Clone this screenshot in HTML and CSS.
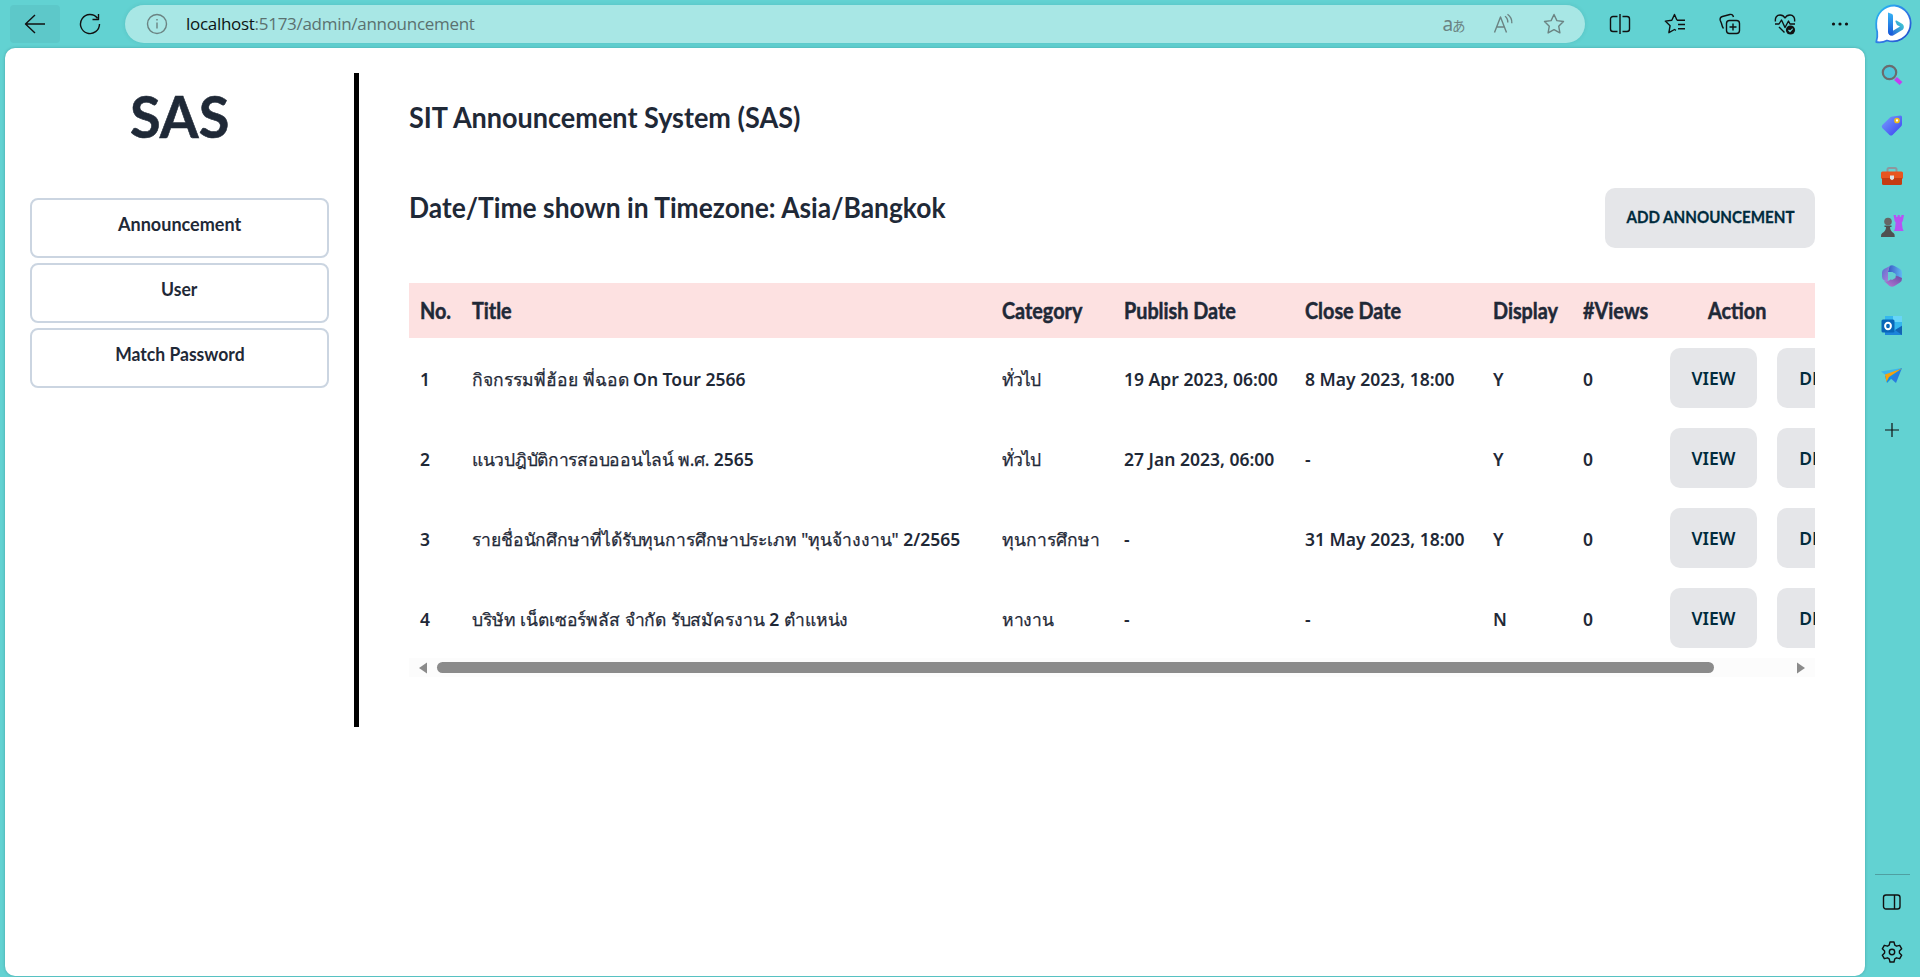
FILE: index.html
```
<!DOCTYPE html>
<html lang="en">
<head>
<meta charset="utf-8">
<title>SIT Announcement System</title>
<link rel="stylesheet" href="styles.css">
</head>
<body>
<header class="toolbar">
  <div class="back"><svg width="22" height="22" viewBox="0 0 22 22"><path d="M21 11H1.500M11 2L1.500 11l9.500 9"/></svg></div>
  <div class="reload"><svg width="22" height="22" viewBox="0 0 22 22"><path d="M20.500 11A9.500 9.500 0 1 1 18.500 5.200M19.500 1v5.500h-6"/></svg></div>
  <div class="address">
    <svg class="info" width="22" height="22" viewBox="0 0 22 22"><circle cx="11" cy="11" r="9.500"/><path d="M11 9.500v6M11 6v1.500"/></svg>
    <div class="url"><span class="host">localhost</span>:5173/admin/announcement</div>
    <div class="tool translate"><span class="latin">a</span><span class="kana">あ</span></div>
    <div class="tool"><svg width="22" height="22" viewBox="0 0 22 22"><path d="M1.500 19.500L7.500 4l6 15.500M3.500 14h8M12 3.200q3 2.200 2.800 6.300M14.500 1.300q4.700 3.300 4.300 9"/></svg></div>
    <div class="tool"><svg width="22" height="22" viewBox="0 0 22 22"><path d="M11 1.500l2.900 6.100 6.600.9-4.800 4.700 1.200 6.700-5.900-3.200-5.900 3.200 1.200-6.700L1.500 8.500l6.600-.9z"/></svg></div>
  </div>
  <div class="slot"><svg width="22" height="22" viewBox="0 0 22 22"><path d="M8.500 3.500H4A2.500 2.500 0 0 0 1.500 6v10A2.500 2.500 0 0 0 4 18.500h4.500M13.500 3.500H18A2.500 2.500 0 0 1 20.500 6v10a2.500 2.500 0 0 1-2.500 2.500h-4.500M11 1v20"/></svg></div>
  <div class="slot"><svg width="22" height="22" viewBox="0 0 22 22"><path d="M13 7.200h8M14 11.500h7M14 15.800h7M13 7.200L10.500 1.500 7.800 7.300l-6.500.8 4.800 4.600-1.200 7 5.600-3.200 1.500.8"/></svg></div>
  <div class="slot"><svg width="22" height="22" viewBox="0 0 22 22"><rect x="7.500" y="7.500" width="13" height="13" rx="3"/><path d="M14 10.500v7M10.500 14h7M4.500 15.500c-1-1-1.500-2.700-2-5L1.200 7.200C.8 5 1.500 4 3.400 3.500l7.500-2c2-.5 3 .2 3.600 2.500"/></svg></div>
  <div class="slot"><svg width="22" height="22" viewBox="0 0 22 22"><path d="M1.500 8.500C.7 4.500 3 2 6 2c2.500 0 4 1.200 5 3 1-1.800 2.500-3 5-3 3 0 5.300 2.500 4.500 6.500M1 11h4l2.500-4 3.500 7.500L14.500 8l1.500 3h5M5 14l5.500 5.500"/><circle cx="16.500" cy="17" r="4.600" class="solid"/><path class="tick" d="M14.500 17l1.500 1.500 2.700-2.800"/></svg></div>
  <div class="slot"><svg width="22" height="22" viewBox="0 0 22 22"><g class="solid"><circle cx="4.500" cy="11" r="1.600"/><circle cx="11" cy="11" r="1.600"/><circle cx="17.500" cy="11" r="1.600"/></g></svg></div>
  <div class="bing"><svg width="40" height="40" viewBox="0 0 40 40">
    <defs><linearGradient id="ring" x1="0" y1="0" x2="1" y2="1"><stop offset="0" stop-color="#25bff2"/><stop offset=".55" stop-color="#3179e6"/><stop offset="1" stop-color="#1c49c9"/></linearGradient><linearGradient id="stem" x1="0" y1="0" x2="0" y2="1"><stop offset="0" stop-color="#38b5f5"/><stop offset="1" stop-color="#1556d8"/></linearGradient><linearGradient id="bowl" x1="0" y1="1" x2="1" y2="0"><stop offset="0" stop-color="#2456de"/><stop offset="1" stop-color="#43d8d0"/></linearGradient></defs>
    <path d="M20.500 1.500A18 18 0 1 1 13 36.500Q8 39 2.200 38q1.600-4.500 1-10Q2 24 2.200 19.500A18 18 0 0 1 20.500 1.500z" fill="#fff" stroke="url(#ring)" stroke-width="1.800"/>
    <path d="M15 30.500q2 2 4.500.7l9.500-5.700q2-3-.5-5.500l-6-3.500q-1.500-.3-1 1.200l1.500 3.400 3 1.500-10 6z" fill="url(#bowl)" stroke="none"/>
    <path d="M14 8.500l4 1.500q1 .5 1 2v17q-1 3-3.500 1.800Q14 30 14 28z" fill="url(#stem)" stroke="none"/></svg></div>
</header>
<div class="window">
  <div class="page">
    <aside class="side">
      <h1 class="logo"><span>SAS</span></h1>
      <nav class="menu">
        <a class="item"><span class="n1">Announcement</span></a>
        <a class="item"><span class="n2">User</span></a>
        <a class="item"><span class="n3">Match Password</span></a>
      </nav>
    </aside>
    <main class="content">
      <h2 class="heading system"><span>SIT Announcement System (SAS)</span></h2>
      <div class="bar">
        <h2 class="heading zone"><span>Date/Time shown in Timezone: Asia/Bangkok</span></h2>
        <button class="btn add"><span>ADD ANNOUNCEMENT</span></button>
      </div>
      <div class="table">
        <div class="row head"><span>No.</span><span>Title</span><span>Category</span><span>Publish Date</span><span>Close Date</span><span>Display</span><span>#Views</span><span class="act">Action</span></div>
        <div class="row"><div>1</div><div><span class="th">กิจกรรมพี่ฮ้อย พี่ฉอด</span> On Tour 2566</div><div class="th short">ทั่วไป</div><div>19 Apr 2023, 06:00</div><div>8 May 2023, 18:00</div><div>Y</div><div>0</div><div class="actions"><button class="btn">VIEW</button><button class="btn delete">DELETE</button></div></div>
        <div class="row"><div>2</div><div><span class="th tight">แนวปฎิบัติการสอบออนไลน์ พ.ศ.</span> 2565</div><div class="th short">ทั่วไป</div><div>27 Jan 2023, 06:00</div><div>-</div><div>Y</div><div>0</div><div class="actions"><button class="btn">VIEW</button><button class="btn delete">DELETE</button></div></div>
        <div class="row"><div>3</div><div><span class="th close">รายชื่อนักศึกษาที่ได้รับทุนการศึกษาประเภท "ทุนจ้างงาน"</span> 2/2565</div><div class="th">ทุนการศึกษา</div><div>-</div><div>31 May 2023, 18:00</div><div>Y</div><div>0</div><div class="actions"><button class="btn">VIEW</button><button class="btn delete">DELETE</button></div></div>
        <div class="row"><div>4</div><div><span class="th close">บริษัท เน็ตเซอร์พลัส จำกัด รับสมัครงาน</span> 2 <span class="th close">ตำแหน่ง</span></div><div class="th tight">หางาน</div><div>-</div><div>-</div><div>N</div><div>0</div><div class="actions"><button class="btn">VIEW</button><button class="btn delete">DELETE</button></div></div>
      </div>
      <div class="scroll"><svg width="8" height="12" viewBox="0 0 8 12"><path d="M8 .5v11L0 6z"/></svg><div class="thumb"></div><svg width="8" height="12" viewBox="0 0 8 12"><path d="M0 .5v11L8 6z"/></svg></div>
    </main>
  </div>
  <aside class="apps">
    <div class="app"><svg width="24" height="24" viewBox="0 0 24 24"><path d="M15.500 15.500l5.500 5" stroke="#c63cf2" stroke-width="4.200"/><circle cx="9.500" cy="9.500" r="6.700" fill="#4fc6da" stroke="#6b6b6e" stroke-width="2.200"/></svg></div>
    <div class="app"><svg class="low" width="24" height="24" viewBox="0 0 24 24"><defs><linearGradient id="tag" x1="0" y1="0" x2="1" y2="1"><stop offset="0" stop-color="#78a3ff"/><stop offset="1" stop-color="#3a3ef0"/></linearGradient></defs><path d="M12.500 2.500l8-1q1.500 0 1.500 1.500v7q0 1.500-1 2.500l-8.500 8.500q-1.500 1.200-3 0L2.300 14q-1.200-1.500 0-3l8-7.700q1-.7 2.200-.8z" fill="url(#tag)"/><circle cx="17" cy="6.500" r="2" fill="#fff" stroke="#f2bc17" stroke-width="1.700"/></svg></div>
    <div class="app"><svg width="24" height="24" viewBox="0 0 24 24"><path d="M7.500 8V5.500q0-1.500 1.500-1.500h6q1.500 0 1.500 1.500V8" fill="none" stroke="#8e979d" stroke-width="2"/><rect x="1" y="7.500" width="22" height="7.500" rx="1.500" fill="#e8551f"/><path d="M2 14h20v5.500q0 1.500-1.500 1.500h-17Q2 21 2 19.500z" fill="#c43c12"/><path d="M10 11.500h4v3.200l-2 1.500-2-1.500z" fill="#dce3e6"/></svg></div>
    <div class="app"><svg width="24" height="24" viewBox="0 0 24 24"><path d="M13.500 1h2.500v1.800h1.700V1h2v1.800h1.600V1H24l-1.200 6-1 1.500.8 6 1 2.500H14l1-2.500.7-6-1-1.500z" fill="#b653f4"/><circle cx="8" cy="7.500" r="3.800" fill="#666"/><path d="M4.500 11.500h7v1.500H10q.2 4 3.500 6 1.500 1.200 1.200 4H1q-.3-2.800 1.300-4Q6 17 6 13H4.500z" fill="#505050"/></svg></div>
    <div class="app"><svg width="24" height="24" viewBox="0 0 24 24"><defs><linearGradient id="petal" x1="0" y1="0" x2="1" y2="0"><stop offset="0" stop-color="#3b56c4"/><stop offset="1" stop-color="#5fb9f2"/></linearGradient><linearGradient id="left" x1="0" y1="0" x2="1" y2="1"><stop offset="0" stop-color="#5270d0"/><stop offset="1" stop-color="#b97fd8"/></linearGradient><linearGradient id="base" x1="0" y1="1" x2="1" y2="0"><stop offset="0" stop-color="#b77cd8"/><stop offset="1" stop-color="#6a4aa5"/></linearGradient></defs><path d="M9.500 2q2.500-1.500 5 0l5.500 3q2 1.200 2 3.500v5.500l-6.500-2V10L12 8 8 8z" fill="url(#petal)"/><path d="M10.500 1.700Q8 4 8 8v8.500q0 1.500-1.500 1L4 16.300q-2-1.200-2-3.500V8.500Q2 6 4 5z" fill="url(#left)"/><path d="M4 17q2.500 1.200 5-.5l6-4q1.500-1 3-.3l4 1.800q.2 3-2 4.500L14.500 22q-2.500 1.500-5 0z" fill="url(#base)"/><path d="M12 8l3.500 2v4L12 16l-3.500-2v-4z" fill="#64cdd2"/></svg></div>
    <div class="app"><svg class="high" width="24" height="24" viewBox="0 0 24 24"><path d="M5 2h17v19H5z" fill="#35b7ee"/><path d="M13 2h9v6h-9z" fill="#67d5f7"/><path d="M5 13l9 4 8-5.500V21H5z" fill="#1b83da"/><path d="M15 16l7-4v9z" fill="#1264b4"/><rect x="1.500" y="5.500" width="13" height="13" rx="1.500" fill="#0866b8"/><ellipse cx="8" cy="12" rx="2.900" ry="3.300" fill="none" stroke="#fff" stroke-width="2"/></svg></div>
    <div class="app"><svg class="high" width="24" height="24" viewBox="0 0 24 24"><path d="M1 7.500L22 4 8 13z" fill="#3cb5ef"/><path d="M22 4l-6 15-7-6z" fill="#277de0"/><path d="M22 4L5 12l2 7 4-4z" fill="#168ce6"/><path d="M22 4.500L5 10.500l1.500 7.500 2.500-5z" fill="#f6a20d"/></svg></div>
    <div class="app plus"><svg width="16" height="16" viewBox="0 0 16 16"><path d="M8 1v14M1 8h14"/></svg></div>
    <hr class="rule">
    <div class="foot"><svg width="20" height="20" viewBox="0 0 20 20"><rect x="1.500" y="3" width="16.500" height="14" rx="2.500"/><path d="M12.500 3v14"/></svg></div>
    <div class="foot"><svg width="24" height="24" viewBox="0 0 24 24"><circle cx="12" cy="12" r="2.700"/><path d="M10 2h4l.8 3.200 1.700 1 3.200-.9 2 3.500L19.400 11v2l2.300 2.200-2 3.500-3.200-.9-1.700 1L14 22h-4l-.8-3.200-1.700-1-3.200.9-2-3.500L4.600 13v-2L2.300 8.800l2-3.500 3.200.9 1.700-1z"/></svg></div>
  </aside>
</div>
</body>
</html>
```
FILE: styles.css
```
* { box-sizing: border-box; }
body { margin: 0; height: 977px; overflow: hidden; background: #62d2d2; color: #1f2937; font-family: "Noto Sans", sans-serif; display: flex; flex-direction: column; }
svg { display: block; flex: none; fill: none; stroke: #111; stroke-width: 1.4; stroke-linejoin: round; }
svg .solid { fill: #111; stroke: none; }
svg .tick { stroke: #62d2d2; stroke-width: 1.2; }

.toolbar { height: 48px; flex: none; display: flex; align-items: center; padding: 0 6px 0 10px; }
.back { width: 50px; height: 38px; border-radius: 4px; background: #5dc8c9; display: flex; align-items: center; justify-content: center; }
.reload { width: 60px; display: flex; justify-content: center; }
.address { width: 1460px; height: 38px; margin-left: 5px; border-radius: 19px; background: #a8e7e5; display: flex; align-items: center; padding: 0 6px 0 21px; box-shadow: 0 0 4px rgba(0, 70, 80, .12); }
.address svg { stroke: #6b8382; }
.url { flex: 1; margin-left: 18px; font: 400 17px/24px "Open Sans", sans-serif; letter-spacing: -.29px; color: #5b7170; }
.url .host { color: #0c1414; }
.tool { width: 50px; display: flex; justify-content: center; color: #6b8382; }
.translate { align-items: baseline; line-height: 24px; }
.latin { font-size: 19px; }
.kana { font: 13.5px "Noto Sans CJK JP", sans-serif; margin-left: -1px; }
.slot { width: 55.2px; display: flex; justify-content: center; }
.address + .slot { margin-left: 7px; }
.bing { margin-left: auto; }

.window { flex: 1; display: flex; padding-left: 5px; }
.page { width: 1860px; height: 928px; background: #fff; border-radius: 10px; display: flex; align-items: flex-start; padding-top: 25px; box-shadow: 0 0 3px rgba(0, 60, 70, .3); }
.side { width: 354px; height: 654px; border-right: 5px solid #000; padding: 13px 25px 0; }
.logo { margin: 0 0 52px; font: 700 57px/60px Lato, sans-serif; text-align: center; -webkit-text-stroke: .6px #1f2937; }
.logo span, .item span, .heading span, .add span, .head span { display: inline-block; white-space: nowrap; transform: scaleX(.98); }
.menu { display: flex; flex-direction: column; gap: 5px; }
.item { height: 60px; border: 2px solid #cbd5e1; border-radius: 8px; padding-top: 12px; text-align: center; font: 700 19.5px/24px Lato, sans-serif; }
.item .n1 { transform: scaleX(.925); }
.item .n2, .item .n3 { transform: scaleX(.9); }

.content { width: 1406px; margin-left: 50px; }
.heading { margin: 0; font: 700 28.5px/36px Lato, sans-serif; }
.heading span { transform-origin: left; }
.system { padding-top: 26px; }
.system span { transform: scaleX(.948); }
.zone { padding-top: 1px; }
.zone span { transform: scaleX(.926); }
.bar { display: flex; justify-content: space-between; align-items: flex-start; margin-top: 53px; height: 95px; }
.btn { height: 60px; padding: 0; border: 0; border-radius: 10px; background: #e5e6e9; color: #002b3d; font: 600 17.5px/24px "Noto Sans", sans-serif; width: 87px; flex: none; }
.delete { width: 106px; }
.add { width: 210px; padding-bottom: 2px; font: 700 17px/24px Lato, sans-serif; -webkit-text-stroke: .3px #002b3d; }
.add span { transform: scaleX(.89); margin: 0 -10px; }

.table { overflow: hidden; }
.row { width: 1560px; height: 80px; padding-left: 11px; display: grid; grid-template-columns: 52px 530px 122px 181px 188px 90px 87px 1fr; align-items: center; font-size: 17.5px; font-weight: 600; line-height: 24px; white-space: nowrap; }
.row > div:not(.actions) { padding-top: 1px; }
.head { height: 55px; background: #fde1e1; font: 700 22px/24px Lato, sans-serif; padding-top: 1px; }
.head span { justify-self: start; transform: scaleX(.9); transform-origin: left; -webkit-text-stroke: .5px #1f2937; }
.head .act { margin-left: 38px; }
.row .th { font-weight: 400; -webkit-text-stroke: .25px #1f2937; }
.row .tight { letter-spacing: -.28px; }
.row .close { letter-spacing: -.1px; }
.row .short { letter-spacing: -1px; }
.actions { display: flex; gap: 20px; }
.scroll { height: 19px; padding: 0 10px; background: #fcfcfc; display: flex; align-items: center; }
.scroll svg { fill: #8b8b8b; stroke: none; }
.scroll svg:last-child { margin-left: auto; }
.thumb { width: 1277px; height: 11px; border-radius: 6px; background: #8b8b8b; margin-left: 10px; }

.apps { width: 55px; display: flex; flex-direction: column; align-items: center; padding: 2px 1px 0 0; }
.app { height: 50.3px; display: flex; align-items: center; flex: none; }
.app svg { stroke: none; }
.app .low { margin-top: 2px; }
.app .high { margin-bottom: 2px; }
.plus { padding-top: 5px; }
.plus svg { stroke: #111; stroke-width: 1.2; }
.rule { width: 35px; height: 1px; border: 0; background: #4f9fa1; margin: auto 0 2px; }
.foot { height: 50px; display: flex; align-items: center; flex: none; }
```
